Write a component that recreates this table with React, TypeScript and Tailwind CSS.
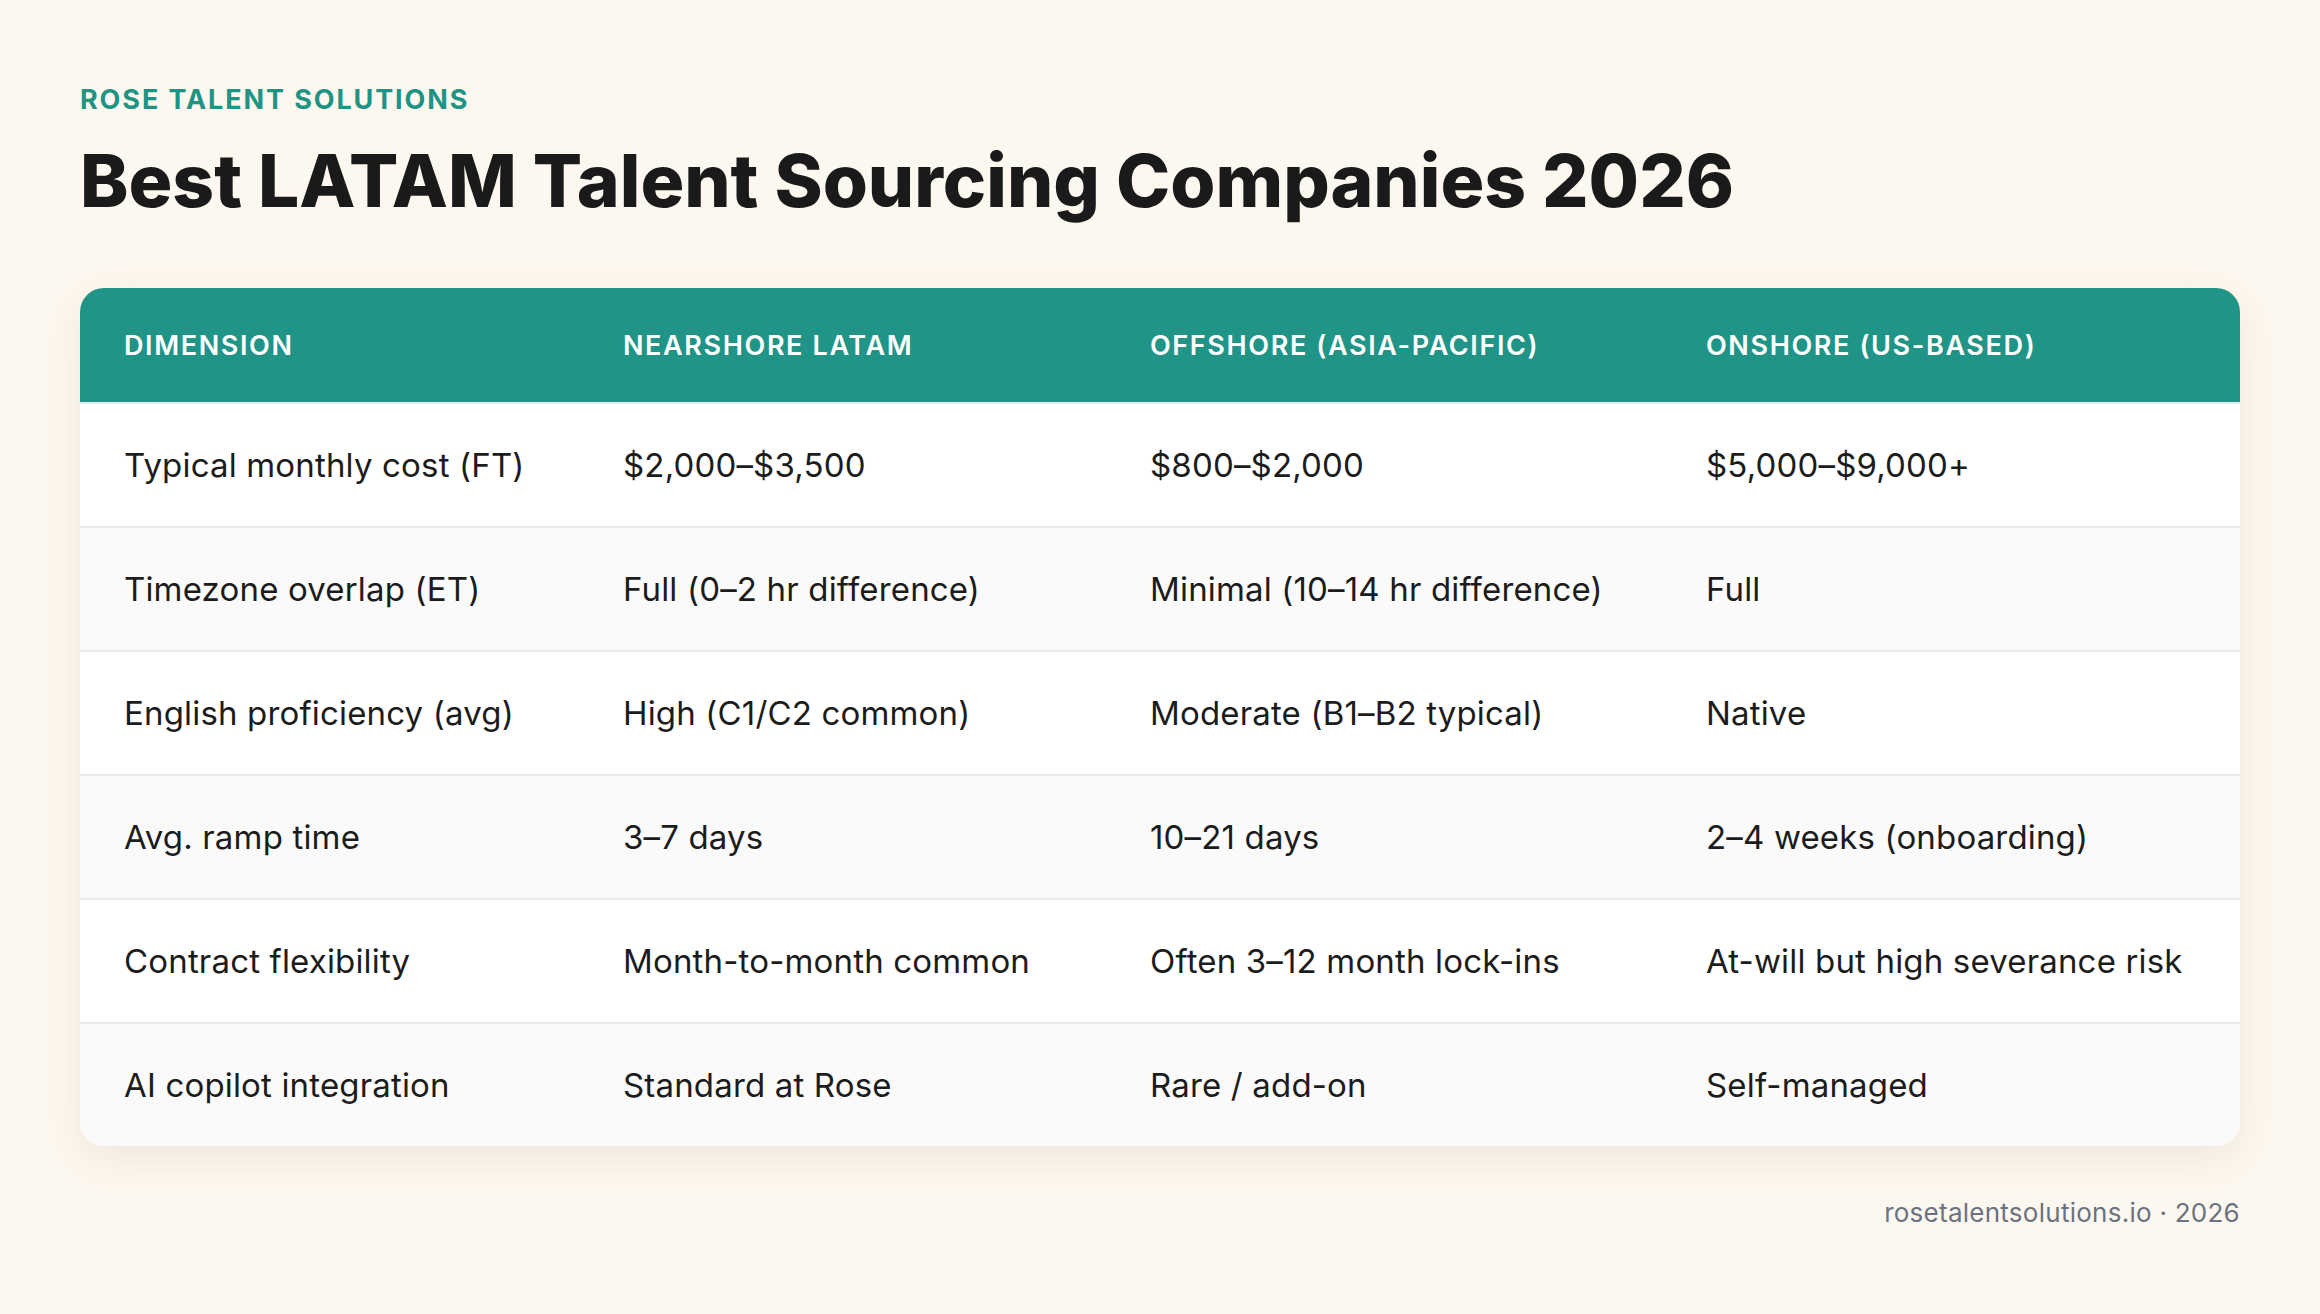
import React from "react";

const rows: [string, string, string, string][] = [
  ["Typical monthly cost (FT)", "$2,000–$3,500", "$800–$2,000", "$5,000–$9,000+"],
  ["Timezone overlap (ET)", "Full (0–2 hr difference)", "Minimal (10–14 hr difference)", "Full"],
  ["English proficiency (avg)", "High (C1/C2 common)", "Moderate (B1–B2 typical)", "Native"],
  ["Avg. ramp time", "3–7 days", "10–21 days", "2–4 weeks (onboarding)"],
  ["Contract flexibility", "Month-to-month common", "Often 3–12 month lock-ins", "At-will but high severance risk"],
  ["AI copilot integration", "Standard at Rose", "Rare / add-on", "Self-managed"],
];

const headers = ["Dimension", "Nearshore LATAM", "Offshore (Asia-Pacific)", "Onshore (US-Based)"];

export default function App() {
  return (
    <div
      className="min-h-[1314px] w-[2320px] bg-[#fdf8ef] px-[80px] pt-[86px]"
      style={{ fontFamily: "Inter, 'Noto Sans', sans-serif" }}
    >
      <div className="text-[27px] font-bold uppercase leading-none tracking-[0.07em] text-[#1f9484]">
        Rose Talent Solutions
      </div>
      <h1 className="mt-[31px] text-[73px] font-extrabold leading-none tracking-[0em] text-[#1a1a1a]">
        Best LATAM Talent Sourcing Companies 2026
      </h1>

      <div className="mt-[71px] overflow-hidden rounded-[24px] bg-white shadow-[0_12px_40px_rgba(140,110,70,0.12)]">
        <div className="grid h-[114px] grid-cols-[499px_527px_556px_578px] items-center bg-[#209486]">
          {headers.map((h) => (
            <div
              key={h}
              className="pl-[44px] text-[27px] font-semibold uppercase leading-none tracking-[0.06em] text-white"
            >
              {h}
            </div>
          ))}
        </div>
        {rows.map((r, i) => (
          <div
            key={i}
            className={
              "grid h-[124px] grid-cols-[499px_527px_556px_578px] items-center border-t-2 border-[#e8e8e8] " +
              (i % 2 === 0 ? "bg-white" : "bg-[#fafafa]")
            }
          >
            {r.map((c, j) => (
              <div key={j} className="pl-[44px] text-[33px] leading-none tracking-[0.005em] text-[#1c1c1c]">
                {c}
              </div>
            ))}
          </div>
        ))}
      </div>

      <div className="mt-[54px] text-right text-[26px] leading-none tracking-[0.01em] text-[#6b7280]">
        rosetalentsolutions.io · 2026
      </div>
    </div>
  );
}
